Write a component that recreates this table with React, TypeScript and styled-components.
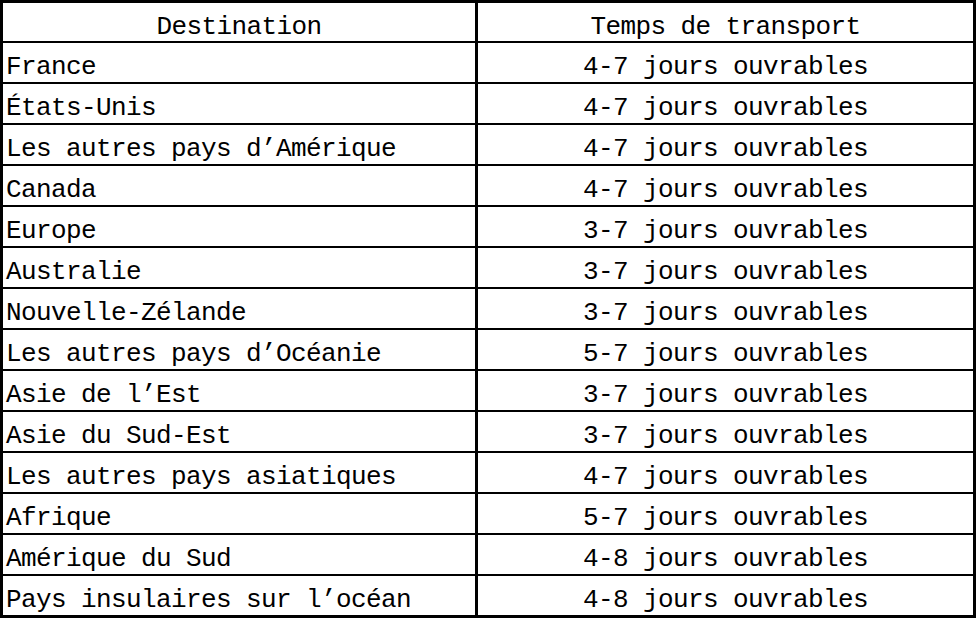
import React from 'react'
import styled, { createGlobalStyle } from 'styled-components'

const GlobalStyle = createGlobalStyle`
  html, body {
    margin: 0;
    padding: 0;
    background: #ffffff;
  }
`

const StyledTable = styled.div`
  width: 976px;
  box-sizing: border-box;
  display: grid;
  grid-template-columns: 472px 1fr;
  grid-template-rows: 38px repeat(14, 39px);
  column-gap: 3px;
  row-gap: 2px;
  padding: 3px;
  background: #000000;
  font-family: "Liberation Mono", "Noto Sans CJK SC", monospace;
  font-size: 26px;
  letter-spacing: -0.6px;
  color: #000000;
`

const Cell = styled.div<{ $center?: boolean }>`
  background: #ffffff;
  box-sizing: border-box;
  padding: 12px 0 0 ${({ $center }) => ($center ? '0' : '3px')};
  line-height: 25px;
  white-space: nowrap;
  overflow: hidden;
  text-align: ${({ $center }) => ($center ? 'center' : 'left')};
`

const rows = [
  ['France', '4-7 jours ouvrables'],
  ['États-Unis', '4-7 jours ouvrables'],
  ['Les autres pays d’Amérique', '4-7 jours ouvrables'],
  ['Canada', '4-7 jours ouvrables'],
  ['Europe', '3-7 jours ouvrables'],
  ['Australie', '3-7 jours ouvrables'],
  ['Nouvelle-Zélande', '3-7 jours ouvrables'],
  ['Les autres pays d’Océanie', '5-7 jours ouvrables'],
  ['Asie de l’Est', '3-7 jours ouvrables'],
  ['Asie du Sud-Est', '3-7 jours ouvrables'],
  ['Les autres pays asiatiques', '4-7 jours ouvrables'],
  ['Afrique', '5-7 jours ouvrables'],
  ['Amérique du Sud', '4-8 jours ouvrables'],
  ['Pays insulaires sur l’océan', '4-8 jours ouvrables'],
]

const App = () => {
  return (
    <>
      <GlobalStyle />
      <StyledTable role="table">
        <Cell $center role="columnheader">Destination</Cell>
        <Cell $center role="columnheader">Temps de transport</Cell>
        {rows.map(([destination, time]) => (
          <React.Fragment key={destination}>
            <Cell role="cell">{destination}</Cell>
            <Cell $center role="cell">{time}</Cell>
          </React.Fragment>
        ))}
      </StyledTable>
    </>
  )
}

export default App
